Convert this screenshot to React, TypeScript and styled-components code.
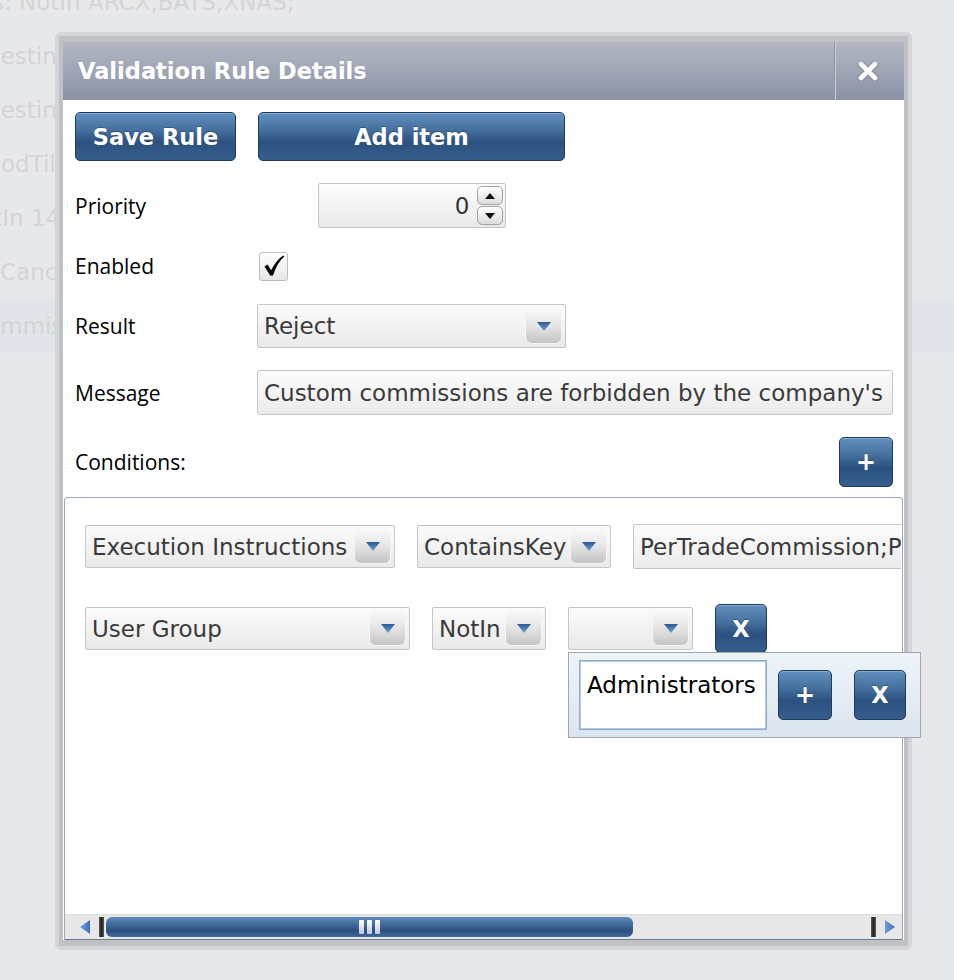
import React from "react";
import styled, { createGlobalStyle } from "styled-components";

const Global = createGlobalStyle`
  html, body { margin: 0; padding: 0; }
  body {
    background: #e7e8ea;
    font-family: "DejaVu Sans", Verdana, sans-serif;
  }
`;

const Page = styled.div`
  position: relative;
  width: 954px;
  height: 980px;
  overflow: hidden;
  background: #e7e8ea;
`;

const BgTable = styled.div`
  display: flex;
  flex-direction: column;
  margin-top: -25px;
`;

const BgRow = styled.div<{ $hl?: boolean }>`
  height: 54px;
  line-height: 54px;
  background: ${(p) => (p.$hl ? "#e1e4e8" : "transparent")};
`;

const BgText = styled.div<{ $indent: number; $max: number }>`
  max-width: ${(p) => p.$max}px;
  overflow: hidden;
  color: #d3d4d7;
  font-size: 23px;
  white-space: nowrap;
  text-indent: ${(p) => p.$indent}px;
`;

const Dialog = styled.div`
  position: absolute;
  left: 55px;
  top: 32px;
  border: 4px solid #d4d5d7;
  border-radius: 6px;
  padding: 6px 4px 6px 4px;
  background: #c0c1c4;
`;

const DialogInner = styled.div`
  width: 841px;
  height: 898px;
  background: #ffffff;
  display: flex;
  flex-direction: column;
`;

const TitleBar = styled.div`
  height: 58px;
  flex: none;
  display: flex;
  background: linear-gradient(#b3b8c4, #8a92a4);
`;

const Title = styled.div`
  flex: 1;
  display: flex;
  align-items: center;
  padding-left: 15px;
  color: #ffffff;
  font-weight: bold;
  font-size: 22.5px;
`;

const CloseBox = styled.div`
  width: 66px;
  border-left: 1px solid #8e95a3;
  box-shadow: inset 1px 0 0 #c6cad2;
  display: flex;
  align-items: center;
  justify-content: center;
  padding-right: 3px;
  svg {
    filter: drop-shadow(0 0 1px rgba(60, 70, 90, 0.6));
  }
`;

const Body = styled.div`
  padding: 12px 11px 0 12px;
  display: flex;
  flex-direction: column;
  gap: 22px;
`;

const ButtonRow = styled.div`
  display: flex;
  gap: 22px;
`;

const BlueButton = styled.button<{ $w: number; $h: number; $fs?: number }>`
  width: ${(p) => p.$w}px;
  height: ${(p) => p.$h}px;
  box-sizing: border-box;
  padding: 0;
  border: 1px solid #1f3c60;
  border-radius: 5px;
  background: linear-gradient(
    180deg,
    #6190be 0%,
    #46719f 35%,
    #2c5180 62%,
    #365e8c 100%
  );
  box-shadow: inset 0 1px 0 rgba(255, 255, 255, 0.25);
  color: #ffffff;
  font-family: "DejaVu Sans", Verdana, sans-serif;
  font-weight: bold;
  font-size: ${(p) => p.$fs ?? 22.5}px;
  text-shadow: 0 -1px 0 rgba(0, 0, 0, 0.25);
  display: flex;
  align-items: center;
  justify-content: center;
  flex: none;
`;

const FormRow = styled.div<{ $h: number }>`
  height: ${(p) => p.$h}px;
  display: grid;
  grid-template-columns: 182px 1fr;
  align-items: center;
`;

const Label = styled.div`
  font-family: "Open Sans", "Noto Sans", sans-serif;
  font-size: 21px;
  color: #000000;
`;

const CenterSlot = styled.div<{ $w: number }>`
  width: ${(p) => p.$w}px;
  display: flex;
  justify-content: center;
`;

const SpinBox = styled.div`
  width: 188px;
  height: 45px;
  box-sizing: border-box;
  border: 1px solid #c4c4c4;
  border-radius: 2px;
  background: linear-gradient(#fdfdfd, #e9e9e9);
  display: flex;
  align-items: center;
  justify-content: flex-end;
  gap: 7px;
  padding-right: 2px;
  font-size: 23px;
  color: #333333;
`;

const SpinCol = styled.div`
  display: flex;
  flex-direction: column;
  gap: 1px;
`;

const SpinBtn = styled.div`
  width: 26px;
  height: 19px;
  box-sizing: border-box;
  border: 1px solid #a2a2a2;
  border-radius: 5px;
  background: linear-gradient(#ffffff, #dcdcdc);
  display: flex;
  align-items: center;
  justify-content: center;
`;

const CheckBox = styled.div`
  width: 29px;
  height: 29px;
  box-sizing: border-box;
  margin-left: 2px;
  border: 1px solid #bdbdbd;
  border-radius: 3px;
  background: linear-gradient(#ffffff, #e6e6e6);
  display: flex;
  align-items: center;
  justify-content: center;
`;

const SelectBox = styled.div<{ $w: number; $h?: number }>`
  width: ${(p) => p.$w}px;
  height: ${(p) => p.$h ?? 43}px;
  box-sizing: border-box;
  flex: none;
  border: 1px solid #c6c6c6;
  border-radius: 2px;
  background: linear-gradient(#fbfbfb, #e9e9e9);
  display: flex;
  align-items: center;
  justify-content: space-between;
  padding: 3px 3px 3px 6px;
  font-size: 23px;
  color: #3a3a3a;
  white-space: nowrap;
`;

const DropBtn = styled.div`
  width: 37px;
  align-self: stretch;
  box-sizing: border-box;
  border: 1px solid #f6f6f6;
  border-radius: 7px;
  background: linear-gradient(#f8f8f8 0%, #e4e4e4 50%, #c4c4c4 100%);
  display: flex;
  align-items: center;
  justify-content: center;
`;

const TextBox = styled.div<{ $w: number; $h?: number; $open?: boolean }>`
  width: ${(p) => p.$w}px;
  height: ${(p) => p.$h ?? 45}px;
  box-sizing: border-box;
  flex: none;
  border: 1px solid #c6c6c6;
  border-right: ${(p) => (p.$open ? "none" : "1px solid #c6c6c6")};
  border-radius: ${(p) => (p.$open ? "2px 0 0 2px" : "3px")};
  background: linear-gradient(#fcfcfc, #ebebeb);
  display: flex;
  align-items: center;
  padding-left: 6px;
  overflow: hidden;
  font-size: 23px;
  color: #3a3a3a;
  white-space: nowrap;
`;

const CondRow = styled.div`
  height: 50px;
  display: flex;
  align-items: center;
  justify-content: space-between;
`;

const Panel = styled.div`
  flex: 1;
  margin: 10px 1px 0 1px;
  border: 1px solid #9ca8b6;
  border-bottom: none;
  border-radius: 4px 4px 0 0;
  display: flex;
  flex-direction: column;
  min-height: 0;
`;

const PanelContent = styled.div`
  flex: 1;
  padding: 26px 0 0 20px;
  display: flex;
  flex-direction: column;
  gap: 35px;
`;

const CondLine = styled.div<{ $h: number }>`
  height: ${(p) => p.$h}px;
  display: flex;
  align-items: center;
  gap: 22px;
`;

const Anchor = styled.div`
  position: relative;
  flex: none;
`;

const Popup = styled.div`
  position: absolute;
  left: 0;
  top: calc(100% + 2px);
  width: 353px;
  height: 86px;
  box-sizing: border-box;
  border: 1px solid #a3a7ac;
  background: linear-gradient(#eef3f9, #dce5f0);
  padding: 0 0 0 10px;
  display: flex;
  align-items: center;
  gap: 11px;
  z-index: 2;
`;

const ListBox = styled.div`
  width: 188px;
  height: 70px;
  box-sizing: border-box;
  border: 1px solid #98a9bb;
  box-shadow: inset 0 0 0 1px #a8cdef;
  background: #ffffff;
  padding: 11px 0 0 7px;
  font-size: 23px;
  color: #000000;
  flex: none;
`;

const PopupActions = styled.div`
  display: flex;
  gap: 22px;
`;

const ScrollBar = styled.div`
  height: 24px;
  flex: none;
  background: #e7e7e7;
  border-top: 1px solid #dedede;
  border-bottom: 1px solid #6d7c8c;
  display: flex;
  align-items: center;
  padding: 0 7px 0 15px;
`;

const StopBar = styled.div<{ $ml: number; $mr: number }>`
  width: 5px;
  height: 20px;
  margin-left: ${(p) => p.$ml}px;
  margin-right: ${(p) => p.$mr}px;
  background: linear-gradient(90deg, #5a5a5a, #222 50%, #5a5a5a);
  flex: none;
`;

const Thumb = styled.div`
  width: 527px;
  height: 20px;
  border-radius: 6px;
  background: linear-gradient(#5f8bba 0%, #3f6898 40%, #2b507e 70%, #40699a 100%);
  display: flex;
  align-items: center;
  justify-content: center;
  gap: 3px;
  flex: none;
`;

const Grip = styled.div`
  width: 5px;
  height: 14px;
  border-radius: 1px;
  background: linear-gradient(#ffffff, #b8c9de);
`;

const Spacer = styled.div`
  flex: 1;
`;

const DownArrow = () => (
  <svg width="14" height="9" viewBox="0 0 14 9">
    <defs>
      <linearGradient id="dArrow" x1="0" y1="0" x2="0" y2="1">
        <stop offset="0" stopColor="#2a5a90" />
        <stop offset="1" stopColor="#6fa2d6" />
      </linearGradient>
    </defs>
    <path d="M0 0 H14 L7 9 Z" fill="url(#dArrow)" />
  </svg>
);

const SpinArrow = ({ up }: { up?: boolean }) => (
  <svg width="10" height="6" viewBox="0 0 10 6">
    <path d={up ? "M0 6 H10 L5 0 Z" : "M0 0 H10 L5 6 Z"} fill="#111" />
  </svg>
);

const Check = () => (
  <svg width="24" height="24" viewBox="0 0 24 24">
    <path
      d="M2.5 12.5 L5.5 10.5 L9.2 16.2 C12.5 9.5 16.5 4.5 21.5 1.5 L22.3 2.6 C17.5 6.8 13.8 13 11 21.5 L8.2 21.5 Z"
      fill="#000"
    />
  </svg>
);

const CloseIcon = () => (
  <svg width="20" height="20" viewBox="0 0 20 20">
    <path d="M3 3 L17 17 M17 3 L3 17" stroke="#ffffff" strokeWidth="4.6" strokeLinecap="round" />
  </svg>
);

const SideArrow = ({ right }: { right?: boolean }) => (
  <svg width="11" height="14" viewBox="0 0 11 14">
    <defs>
      <linearGradient id="sArrow" x1="0" y1="0" x2="1" y2="0">
        <stop offset="0" stopColor="#6f9fe0" />
        <stop offset="1" stopColor="#3d6fbd" />
      </linearGradient>
    </defs>
    <path d={right ? "M1 0 L11 7 L1 14 Z" : "M10 0 L0 7 L10 14 Z"} fill="url(#sArrow)" />
  </svg>
);

const Select = ({ w, h, value }: { w: number; h?: number; value: string }) => (
  <SelectBox $w={w} $h={h}>
    <span>{value}</span>
    <DropBtn>
      <DownArrow />
    </DropBtn>
  </SelectBox>
);

const bgRows: { text: string; indent: number; max: number; hl?: boolean }[] = [
  { text: "s: NotIn ARCX,BATS,XNAS;", indent: -8, max: 300 },
  { text: "Destination", indent: -17, max: 58 },
  { text: "Destination", indent: -17, max: 58 },
  { text: "GoodTillCancel", indent: -31, max: 58 },
  { text: "NotIn 143", indent: -38, max: 58 },
  { text: "Cancel", indent: 0, max: 58 },
  { text: "Commission", indent: -30, max: 58, hl: true },
];

export default function App() {
  return (
    <Page>
      <Global />
      <BgTable>
        {bgRows.map((r, i) => (
          <BgRow key={i} $hl={r.hl}>
            <BgText $indent={r.indent} $max={r.max}>
              {r.text}
            </BgText>
          </BgRow>
        ))}
      </BgTable>

      <Dialog>
        <DialogInner>
          <TitleBar>
            <Title>Validation Rule Details</Title>
            <CloseBox>
              <CloseIcon />
            </CloseBox>
          </TitleBar>

          <Body>
            <ButtonRow>
              <BlueButton $w={161} $h={49}>Save Rule</BlueButton>
              <BlueButton $w={307} $h={49}>Add item</BlueButton>
            </ButtonRow>

            <FormRow $h={45}>
              <Label>Priority</Label>
              <CenterSlot $w={309}>
                <SpinBox>
                  <span>0</span>
                  <SpinCol>
                    <SpinBtn>
                      <SpinArrow up />
                    </SpinBtn>
                    <SpinBtn>
                      <SpinArrow />
                    </SpinBtn>
                  </SpinCol>
                </SpinBox>
              </CenterSlot>
            </FormRow>

            <FormRow $h={32}>
              <Label>Enabled</Label>
              <CheckBox>
                <Check />
              </CheckBox>
            </FormRow>

            <FormRow $h={44}>
              <Label>Result</Label>
              <Select w={309} h={44} value="Reject" />
            </FormRow>

            <FormRow $h={45}>
              <Label>Message</Label>
              <TextBox $w={636}>Custom commissions are forbidden by the company's</TextBox>
            </FormRow>

            <CondRow>
              <Label>Conditions:</Label>
              <BlueButton $w={54} $h={50} $fs={24}>+</BlueButton>
            </CondRow>
          </Body>

          <Panel>
            <PanelContent>
              <CondLine $h={45}>
                <Select w={310} value="Execution Instructions" />
                <Select w={194} value="ContainsKey" />
                <TextBox $w={268} $open>
                  PerTradeCommission;PerShareCommission
                </TextBox>
              </CondLine>

              <CondLine $h={49}>
                <Select w={325} value="User Group" />
                <Select w={114} value="NotIn" />
                <Anchor>
                  <Select w={125} value="" />
                  <Popup>
                    <ListBox>Administrators</ListBox>
                    <PopupActions>
                      <BlueButton $w={54} $h={50} $fs={24}>+</BlueButton>
                      <BlueButton $w={52} $h={50}>X</BlueButton>
                    </PopupActions>
                  </Popup>
                </Anchor>
                <BlueButton $w={52} $h={49}>X</BlueButton>
              </CondLine>
            </PanelContent>

            <ScrollBar>
              <SideArrow />
              <StopBar $ml={8} $mr={2} />
              <Thumb>
                <Grip />
                <Grip />
                <Grip />
              </Thumb>
              <Spacer />
              <StopBar $ml={0} $mr={8} />
              <SideArrow right />
            </ScrollBar>
          </Panel>
        </DialogInner>
      </Dialog>
    </Page>
  );
}
